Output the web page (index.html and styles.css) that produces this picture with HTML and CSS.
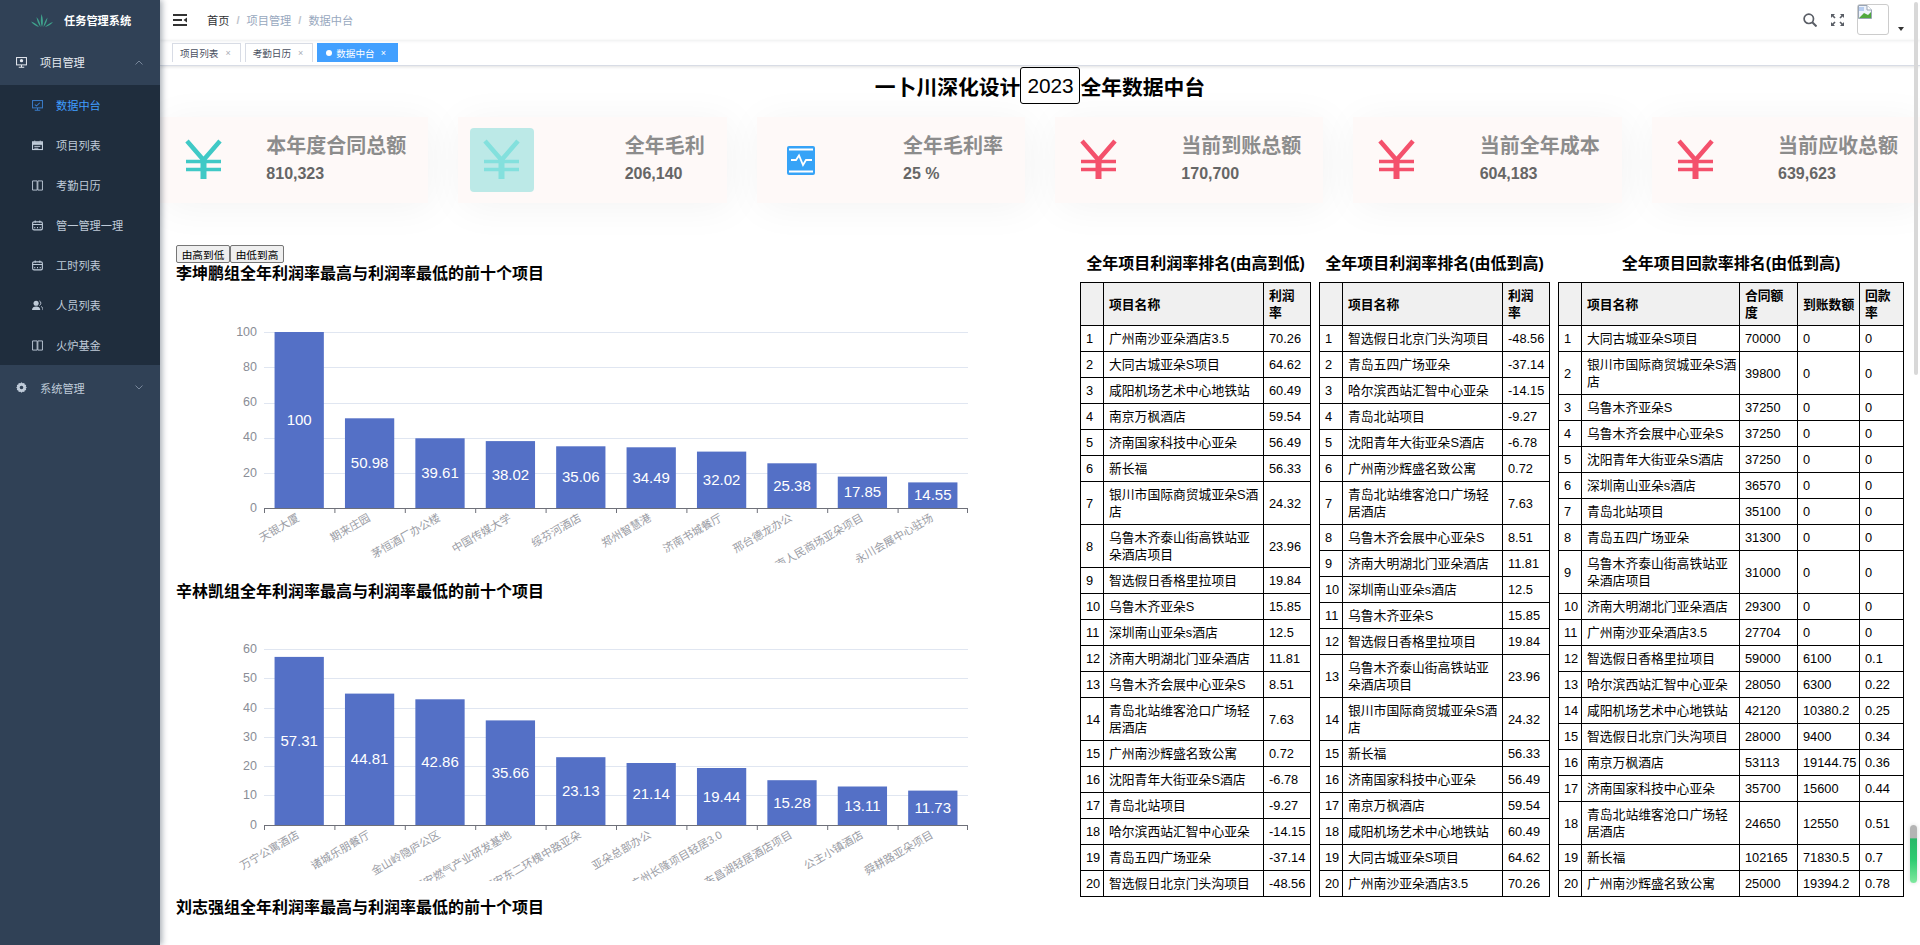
FILE: index.html
```html
<!DOCTYPE html>
<html lang="zh">
<head>
<meta charset="utf-8">
<title>数据中台</title>
<link rel="stylesheet" href="styles.css">
</head>
<body>
<svg class="sprite" aria-hidden="true">
  <symbol id="i-yuan" viewBox="0 0 48 48">
    <path d="M7 5 23.5 24 40 5" fill="none" stroke="currentColor" stroke-width="4.5"/>
    <path d="M6 25.500H41M6 33.500H41" fill="none" stroke="currentColor" stroke-width="3.500"/>
    <path d="M23.500 22V43" fill="none" stroke="currentColor" stroke-width="6"/>
  </symbol>
  <symbol id="i-monitor" viewBox="0 0 12 12">
    <rect x=".6" y=".6" width="10.800" height="8" fill="none" stroke="currentColor" stroke-width="1.100"/>
    <path d="M6 8.600V11M3 11.300H9" fill="none" stroke="currentColor" stroke-width="1.100"/>
    <circle cx="6" cy="4" r="1.800" fill="currentColor"/>
  </symbol>
  <symbol id="i-board" viewBox="0 0 12 12">
    <rect x=".6" y=".6" width="10.800" height="8" fill="none" stroke="currentColor" stroke-width="1.100"/>
    <path d="M6 8.600V11M3 11.300H9M3 5l2 1.500L8.500 3" fill="none" stroke="currentColor" stroke-width="1.100"/>
  </symbol>
  <symbol id="i-list" viewBox="0 0 12 12">
    <rect x=".6" y="2" width="10.800" height="8.400" fill="none" stroke="currentColor" stroke-width="1.200"/>
    <path d="M.6 2.500H11.400V5H.6ZM3 .5V3M9 .5V3" fill="currentColor" stroke="currentColor" stroke-width=".8"/>
    <path d="M2.500 7H9M2.500 9H7" stroke="currentColor"/>
  </symbol>
  <symbol id="i-book" viewBox="0 0 12 12">
    <path d="M.6 1H5.600V11H.6ZM6.400 1H11.400V11H6.400Z" fill="none" stroke="currentColor" stroke-width="1"/>
  </symbol>
  <symbol id="i-cal" viewBox="0 0 12 12">
    <rect x=".7" y="2" width="10.600" height="8.800" rx="1.500" fill="none" stroke="currentColor" stroke-width="1.200"/>
    <path d="M.7 5H11.300M3.500 .6V3M8.500 .6V3M3 7.500V9M6 7.500V9M9 7.500V9" fill="none" stroke="currentColor" stroke-width="1.100"/>
  </symbol>
  <symbol id="i-user" viewBox="0 0 12 12">
    <circle cx="4.500" cy="3.500" r="2.800" fill="currentColor"/>
    <path d="M0 11C0 8 2 7 4.500 7S9 8 9 11Z" fill="currentColor"/>
    <path d="M8 1a2.700 2.700 0 0 1 0 5M10 7c1.200.7 2 2 2 4" fill="none" stroke="currentColor"/>
  </symbol>
  <symbol id="i-gear" viewBox="0 0 12 12">
    <path d="M6 .3 7.300 1.400 9 1 9.500 2.600 11.100 3.200 10.700 4.900 11.800 6 10.700 7.100 11.100 8.800 9.500 9.400 9 11 7.300 10.600 6 11.700 4.700 10.600 3 11 2.500 9.400.9 8.800 1.300 7.100.2 6 1.300 4.900.9 3.200 2.500 2.600 3 1 4.700 1.400ZM6 4a2 2 0 1 0 0 4 2 2 0 0 0 0-4Z" fill="currentColor" fill-rule="evenodd"/>
  </symbol>
</svg>

<aside class="sidebar">
  <div class="logo">
    <svg class="logo-mark" viewBox="0 0 22 13"><path d="M11 13C9.500 9 9.500 5 10.500 0 12 4 12.500 9 11 13ZM9.500 13C7.500 10 6 7 5.500 3 8 6 9.500 9 9.500 13ZM12.500 13C13 9 14.500 6 16.500 3.500 16 7 15 10 12.500 13ZM8 13C5 12 2 10.500 0 7.500 3.500 8.500 6 10.500 8 13ZM14 13C16.500 10.500 19 9 22 8 20 10.500 17 12.500 14 13Z" fill="#3fa38d"/></svg>
    <span class="logo-text">任务管理系统</span>
  </div>
  <div class="menu-top open">
    <svg class="menu-icon"><use href="#i-monitor"/></svg>
    <span>项目管理</span>
    <svg class="chev" viewBox="0 0 8 5"><path d="M.5 4.500 4 1l3.500 3.500" fill="none" stroke="currentColor"/></svg>
  </div>
  <ul class="submenu">
    <li class="active"><svg class="sub-icon"><use href="#i-board"/></svg>数据中台</li>
    <li><svg class="sub-icon"><use href="#i-list"/></svg>项目列表</li>
    <li><svg class="sub-icon"><use href="#i-book"/></svg>考勤日历</li>
    <li><svg class="sub-icon"><use href="#i-cal"/></svg>管一管理一理</li>
    <li><svg class="sub-icon"><use href="#i-cal"/></svg>工时列表</li>
    <li><svg class="sub-icon"><use href="#i-user"/></svg>人员列表</li>
    <li><svg class="sub-icon"><use href="#i-book"/></svg>火炉基金</li>
  </ul>
  <div class="menu-top closed">
    <svg class="menu-icon"><use href="#i-gear"/></svg>
    <span>系统管理</span>
    <svg class="chev" viewBox="0 0 8 5"><path d="M.5.500 4 4 7.500.5" fill="none" stroke="currentColor"/></svg>
  </div>
</aside>

<div class="page">
  <header class="navbar">
    <svg class="hamburger" viewBox="0 0 14 12"><path d="M0 1H14M0 11H14M0 6H9" stroke="#333" stroke-width="2" fill="none"/><path d="M14 3.500V8.500L10.500 6Z" fill="#333"/></svg>
    <nav class="crumbs">
      <span class="crumb-home">首页</span><span class="crumb-sep">/</span><span>项目管理</span><span class="crumb-sep">/</span><span>数据中台</span>
    </nav>
    <div class="nav-right">
      <svg class="nav-icon" viewBox="0 0 14 14"><circle cx="5.800" cy="5.800" r="4.700" fill="none" stroke="#5a5e66" stroke-width="1.700"/><path d="M9.300 9.300 13.500 13.500" stroke="#5a5e66" stroke-width="2"/></svg>
      <svg class="nav-icon wide" viewBox="0 0 15 14"><path d="M1 5V1H5L3.600 2.400 5.600 4.400 4.400 5.600 2.400 3.600ZM14 5V1H10L11.400 2.400 9.400 4.400 10.600 5.600 12.600 3.600ZM1 9V13H5L3.600 11.600 5.600 9.600 4.400 8.400 2.400 10.400ZM14 9V13H10L11.400 11.600 9.400 9.600 10.600 8.400 12.600 10.400Z" fill="#5a5e66"/></svg>
      <div class="avatar">
        <svg class="broken" viewBox="0 0 14 14"><path d="M.5.500H9L13.500 5V13.500H.5Z" fill="#eef3fb" stroke="#9aa5b5"/><path d="M9 .5V5H13.500" fill="#fff" stroke="#9aa5b5"/><path d="M1 13 6 8 10 10 13 7V13Z" fill="#4fa83d"/><path d="M1 2H6V6H1Z" fill="#b7cdf0"/></svg>
      </div>
      <span class="caret"></span>
    </div>
  </header>
  <div class="tags">
    <span class="tag">项目列表<i class="tag-x">×</i></span>
    <span class="tag">考勤日历<i class="tag-x">×</i></span>
    <span class="tag current"><i class="tag-dot"></i>数据中台<i class="tag-x">×</i></span>
  </div>

  <main class="content">
    <h1 class="headline">一卜川深化设计<span class="year">2023</span>全年数据中台</h1>

    <section class="cards">
      <div class="card"><div class="card-icon teal"><svg class="card-svg"><use href="#i-yuan"/></svg></div><div class="card-text"><div class="card-title">本年度合同总额</div><div class="card-value">810,323</div></div></div>
      <div class="card"><div class="card-icon teal hover"><svg class="card-svg"><use href="#i-yuan"/></svg></div><div class="card-text"><div class="card-title">全年毛利</div><div class="card-value">206,140</div></div></div>
      <div class="card"><div class="card-icon"><svg class="card-svg" viewBox="0 0 48 48"><rect x="10" y="10" width="28" height="29" rx="2" fill="#36a3f7"/><path d="M12 13.500H36M12 35.500H36M14 24H19L22 19.500 26 29 29 24H35" fill="none" stroke="#fff" stroke-width="1.800"/></svg></div><div class="card-text"><div class="card-title">全年毛利率</div><div class="card-value">25 %</div></div></div>
      <div class="card"><div class="card-icon red"><svg class="card-svg"><use href="#i-yuan"/></svg></div><div class="card-text"><div class="card-title">当前到账总额</div><div class="card-value">170,700</div></div></div>
      <div class="card"><div class="card-icon red"><svg class="card-svg"><use href="#i-yuan"/></svg></div><div class="card-text"><div class="card-title">当前全年成本</div><div class="card-value">604,183</div></div></div>
      <div class="card"><div class="card-icon red"><svg class="card-svg"><use href="#i-yuan"/></svg></div><div class="card-text"><div class="card-title">当前应收总额</div><div class="card-value">639,623</div></div></div>
    </section>

    <section class="board">
      <div class="charts">
        <div class="sort-btns"><button class="sort-btn">由高到低</button><button class="sort-btn">由低到高</button></div>
        <h3 class="chart-title">李坤鹏组全年利润率最高与利润率最低的前十个项目</h3>
        <svg class="chart">
          <g class="grid">
            <path d="M88 46.500H792M88 81.500H792M88 117.500H792M88 152.500H792M88 187.500H792"/>
          </g>
          <g class="yticks">
            <text x="81" y="50">100</text><text x="81" y="85">80</text><text x="81" y="120">60</text><text x="81" y="155">40</text><text x="81" y="191">20</text><text x="81" y="226">0</text>
          </g>
          <g class="bars">
            <rect x="98.560" y="46" width="49.280" height="176"/><rect x="168.960" y="132.300" width="49.280" height="89.700"/><rect x="239.360" y="152.300" width="49.280" height="69.700"/><rect x="309.760" y="155.100" width="49.280" height="66.900"/><rect x="380.160" y="160.300" width="49.280" height="61.700"/><rect x="450.560" y="161.300" width="49.280" height="60.700"/><rect x="520.960" y="165.600" width="49.280" height="56.400"/><rect x="591.360" y="177.300" width="49.280" height="44.700"/><rect x="661.760" y="190.600" width="49.280" height="31.400"/><rect x="732.160" y="196.400" width="49.280" height="25.600"/>
          </g>
          <g class="vals">
            <text x="123.200" y="139">100</text><text x="193.600" y="182">50.98</text><text x="264" y="192">39.61</text><text x="334.400" y="194">38.02</text><text x="404.800" y="196">35.06</text><text x="475.200" y="197">34.49</text><text x="545.600" y="199">32.02</text><text x="616" y="205">25.38</text><text x="686.400" y="211">17.85</text><text x="756.800" y="214">14.55</text>
          </g>
          <path class="axis" d="M88 222.500H792M88.500 222V227M158.900 222V227M229.300 222V227M299.700 222V227M370.100 222V227M440.500 222V227M510.900 222V227M581.300 222V227M651.700 222V227M722.100 222V227M791.500 222V227"/>
          <g class="cats">
            <text transform="translate(124 234) rotate(-30)">天银大厦</text>
            <text transform="translate(195 234) rotate(-30)">期来庄园</text>
            <text transform="translate(265 234) rotate(-30)">茅恒酒厂办公楼</text>
            <text transform="translate(336 234) rotate(-30)">中国传媒大学</text>
            <text transform="translate(406 234) rotate(-30)">绥芬河酒店</text>
            <text transform="translate(476 234) rotate(-30)">郑州智慧港</text>
            <text transform="translate(547 234) rotate(-30)">济南书城餐厅</text>
            <text transform="translate(617 234) rotate(-30)">邢台德龙办公</text>
            <text transform="translate(688 234) rotate(-30)">济南人民商场亚朵项目</text>
            <text transform="translate(758 234) rotate(-30)">永川会展中心驻场</text>
          </g>
        </svg>

        <h3 class="chart-title spaced">辛林凯组全年利润率最高与利润率最低的前十个项目</h3>
        <svg class="chart">
          <g class="grid">
            <path d="M88 45.500H792M88 74.500H792M88 104.500H792M88 133.500H792M88 162.500H792M88 191.500H792"/>
          </g>
          <g class="yticks">
            <text x="81" y="49">60</text><text x="81" y="78">50</text><text x="81" y="108">40</text><text x="81" y="137">30</text><text x="81" y="166">20</text><text x="81" y="195">10</text><text x="81" y="225">0</text>
          </g>
          <g class="bars">
            <rect x="98.560" y="52.900" width="49.280" height="168.100"/><rect x="168.960" y="89.600" width="49.280" height="131.400"/><rect x="239.360" y="95.300" width="49.280" height="125.700"/><rect x="309.760" y="116.400" width="49.280" height="104.600"/><rect x="380.160" y="153.200" width="49.280" height="67.800"/><rect x="450.560" y="159" width="49.280" height="62"/><rect x="520.960" y="164" width="49.280" height="57"/><rect x="591.360" y="176.200" width="49.280" height="44.800"/><rect x="661.760" y="182.500" width="49.280" height="38.500"/><rect x="732.160" y="186.600" width="49.280" height="34.400"/>
          </g>
          <g class="vals">
            <text x="123.200" y="142">57.31</text><text x="193.600" y="160">44.81</text><text x="264" y="163">42.86</text><text x="334.400" y="174">35.66</text><text x="404.800" y="192">23.13</text><text x="475.200" y="195">21.14</text><text x="545.600" y="198">19.44</text><text x="616" y="204">15.28</text><text x="686.400" y="207">13.11</text><text x="756.800" y="209">11.73</text>
          </g>
          <path class="axis" d="M88 221.500H792M88.500 221V226M158.900 221V226M229.300 221V226M299.700 221V226M370.100 221V226M440.500 221V226M510.900 221V226M581.300 221V226M651.700 221V226M722.100 221V226M791.500 221V226"/>
          <g class="cats">
            <text transform="translate(124 233) rotate(-30)">万宁公寓酒店</text>
            <text transform="translate(195 233) rotate(-30)">诸城乐朋餐厅</text>
            <text transform="translate(265 233) rotate(-30)">金山岭隐庐公区</text>
            <text transform="translate(336 233) rotate(-30)">西安燃气产业研发基地</text>
            <text transform="translate(406 233) rotate(-30)">西安东二环槐中路亚朵</text>
            <text transform="translate(476 233) rotate(-30)">亚朵总部办公</text>
            <text transform="translate(547 233) rotate(-30)">广州长隆项目轻居3.0</text>
            <text transform="translate(617 233) rotate(-30)">山东昌湖轻居酒店项目</text>
            <text transform="translate(688 233) rotate(-30)">公主小镇酒店</text>
            <text transform="translate(758 233) rotate(-30)">舜耕路亚朵项目</text>
          </g>
        </svg>

        <h3 class="chart-title tight">刘志强组全年利润率最高与利润率最低的前十个项目</h3>
      </div>

      <div class="rankings">
        <div class="rank">
          <h3 class="rank-title">全年项目利润率排名(由高到低)</h3>
          <table class="rank-table narrow">
            <colgroup><col class="c-no"><col class="c-name"><col class="c-rate"></colgroup>
            <thead><tr><th></th><th>项目名称</th><th>利润率</th></tr></thead>
            <tbody>
              <tr><td>1</td><td>广州南沙亚朵酒店3.5</td><td>70.26</td></tr>
              <tr><td>2</td><td>大同古城亚朵S项目</td><td>64.62</td></tr>
              <tr><td>3</td><td>咸阳机场艺术中心地铁站</td><td>60.49</td></tr>
              <tr><td>4</td><td>南京万枫酒店</td><td>59.54</td></tr>
              <tr><td>5</td><td>济南国家科技中心亚朵</td><td>56.49</td></tr>
              <tr><td>6</td><td>新长福</td><td>56.33</td></tr>
              <tr><td>7</td><td>银川市国际商贸城亚朵S酒店</td><td>24.32</td></tr>
              <tr><td>8</td><td>乌鲁木齐泰山街高铁站亚朵酒店项目</td><td>23.96</td></tr>
              <tr><td>9</td><td>智选假日香格里拉项目</td><td>19.84</td></tr>
              <tr><td>10</td><td>乌鲁木齐亚朵S</td><td>15.85</td></tr>
              <tr><td>11</td><td>深圳南山亚朵s酒店</td><td>12.5</td></tr>
              <tr><td>12</td><td>济南大明湖北门亚朵酒店</td><td>11.81</td></tr>
              <tr><td>13</td><td>乌鲁木齐会展中心亚朵S</td><td>8.51</td></tr>
              <tr><td>14</td><td>青岛北站维客沧口广场轻居酒店</td><td>7.63</td></tr>
              <tr><td>15</td><td>广州南沙辉盛名致公寓</td><td>0.72</td></tr>
              <tr><td>16</td><td>沈阳青年大街亚朵S酒店</td><td>-6.78</td></tr>
              <tr><td>17</td><td>青岛北站项目</td><td>-9.27</td></tr>
              <tr><td>18</td><td>哈尔滨西站汇智中心亚朵</td><td>-14.15</td></tr>
              <tr><td>19</td><td>青岛五四广场亚朵</td><td>-37.14</td></tr>
              <tr><td>20</td><td>智选假日北京门头沟项目</td><td>-48.56</td></tr>
            </tbody>
          </table>
        </div>
        <div class="rank">
          <h3 class="rank-title">全年项目利润率排名(由低到高)</h3>
          <table class="rank-table narrow">
            <colgroup><col class="c-no"><col class="c-name"><col class="c-rate"></colgroup>
            <thead><tr><th></th><th>项目名称</th><th>利润率</th></tr></thead>
            <tbody>
              <tr><td>1</td><td>智选假日北京门头沟项目</td><td>-48.56</td></tr>
              <tr><td>2</td><td>青岛五四广场亚朵</td><td>-37.14</td></tr>
              <tr><td>3</td><td>哈尔滨西站汇智中心亚朵</td><td>-14.15</td></tr>
              <tr><td>4</td><td>青岛北站项目</td><td>-9.27</td></tr>
              <tr><td>5</td><td>沈阳青年大街亚朵S酒店</td><td>-6.78</td></tr>
              <tr><td>6</td><td>广州南沙辉盛名致公寓</td><td>0.72</td></tr>
              <tr><td>7</td><td>青岛北站维客沧口广场轻居酒店</td><td>7.63</td></tr>
              <tr><td>8</td><td>乌鲁木齐会展中心亚朵S</td><td>8.51</td></tr>
              <tr><td>9</td><td>济南大明湖北门亚朵酒店</td><td>11.81</td></tr>
              <tr><td>10</td><td>深圳南山亚朵s酒店</td><td>12.5</td></tr>
              <tr><td>11</td><td>乌鲁木齐亚朵S</td><td>15.85</td></tr>
              <tr><td>12</td><td>智选假日香格里拉项目</td><td>19.84</td></tr>
              <tr><td>13</td><td>乌鲁木齐泰山街高铁站亚朵酒店项目</td><td>23.96</td></tr>
              <tr><td>14</td><td>银川市国际商贸城亚朵S酒店</td><td>24.32</td></tr>
              <tr><td>15</td><td>新长福</td><td>56.33</td></tr>
              <tr><td>16</td><td>济南国家科技中心亚朵</td><td>56.49</td></tr>
              <tr><td>17</td><td>南京万枫酒店</td><td>59.54</td></tr>
              <tr><td>18</td><td>咸阳机场艺术中心地铁站</td><td>60.49</td></tr>
              <tr><td>19</td><td>大同古城亚朵S项目</td><td>64.62</td></tr>
              <tr><td>20</td><td>广州南沙亚朵酒店3.5</td><td>70.26</td></tr>
            </tbody>
          </table>
        </div>
        <div class="rank">
          <h3 class="rank-title">全年项目回款率排名(由低到高)</h3>
          <table class="rank-table wide">
            <colgroup><col class="c-no"><col class="c-name2"><col class="c-amt"><col class="c-got"><col class="c-ret"></colgroup>
            <thead><tr><th></th><th>项目名称</th><th>合同额度</th><th class="nowrap">到账数额</th><th>回款率</th></tr></thead>
            <tbody>
              <tr><td>1</td><td>大同古城亚朵S项目</td><td>70000</td><td>0</td><td>0</td></tr>
              <tr><td>2</td><td>银川市国际商贸城亚朵S酒店</td><td>39800</td><td>0</td><td>0</td></tr>
              <tr><td>3</td><td>乌鲁木齐亚朵S</td><td>37250</td><td>0</td><td>0</td></tr>
              <tr><td>4</td><td>乌鲁木齐会展中心亚朵S</td><td>37250</td><td>0</td><td>0</td></tr>
              <tr><td>5</td><td>沈阳青年大街亚朵S酒店</td><td>37250</td><td>0</td><td>0</td></tr>
              <tr><td>6</td><td>深圳南山亚朵s酒店</td><td>36570</td><td>0</td><td>0</td></tr>
              <tr><td>7</td><td>青岛北站项目</td><td>35100</td><td>0</td><td>0</td></tr>
              <tr><td>8</td><td>青岛五四广场亚朵</td><td>31300</td><td>0</td><td>0</td></tr>
              <tr><td>9</td><td>乌鲁木齐泰山街高铁站亚朵酒店项目</td><td>31000</td><td>0</td><td>0</td></tr>
              <tr><td>10</td><td>济南大明湖北门亚朵酒店</td><td>29300</td><td>0</td><td>0</td></tr>
              <tr><td>11</td><td>广州南沙亚朵酒店3.5</td><td>27704</td><td>0</td><td>0</td></tr>
              <tr><td>12</td><td>智选假日香格里拉项目</td><td>59000</td><td>6100</td><td>0.1</td></tr>
              <tr><td>13</td><td>哈尔滨西站汇智中心亚朵</td><td>28050</td><td>6300</td><td>0.22</td></tr>
              <tr><td>14</td><td>咸阳机场艺术中心地铁站</td><td>42120</td><td>10380.2</td><td>0.25</td></tr>
              <tr><td>15</td><td>智选假日北京门头沟项目</td><td>28000</td><td>9400</td><td>0.34</td></tr>
              <tr><td>16</td><td>南京万枫酒店</td><td>53113</td><td>19144.75</td><td>0.36</td></tr>
              <tr><td>17</td><td>济南国家科技中心亚朵</td><td>35700</td><td>15600</td><td>0.44</td></tr>
              <tr><td>18</td><td>青岛北站维客沧口广场轻居酒店</td><td>24650</td><td>12550</td><td>0.51</td></tr>
              <tr><td>19</td><td>新长福</td><td>102165</td><td>71830.5</td><td>0.7</td></tr>
              <tr><td>20</td><td>广州南沙辉盛名致公寓</td><td>25000</td><td>19394.2</td><td>0.78</td></tr>
            </tbody>
          </table>
        </div>
      </div>
    </section>
  </main>
</div>

<div class="scroll-thumb"></div>
<div class="scroll-green"></div>
</body>
</html>
```

FILE: styles.css
```css
* { box-sizing: border-box; }
html, body { margin: 0; height: 945px; overflow: hidden; background: #fff; }
body {
  display: flex;
  position: relative;
  font-family: "Liberation Sans", "Noto Sans CJK SC", sans-serif;
  color: #000;
}
.sprite { display: none; }

/* sidebar */
.sidebar {
  flex: 0 0 160px;
  height: 945px;
  background: #304156;
  box-shadow: 2px 0 6px rgba(0, 21, 41, .35);
  font-size: 11.2px;
  color: #bfcbd9;
  position: relative;
  z-index: 2;
}
.logo { height: 35px; display: flex; align-items: center; padding: 5px 0 0 31px; }
.logo-mark { width: 22px; height: 13px; }
.logo-text { margin-left: 11px; font-weight: 700; color: #fff; }
.menu-top { height: 50px; display: flex; align-items: center; padding: 0 17px 0 16px; }
.menu-top.open { color: #e6eaf0; padding-top: 4px; }
.menu-top.closed { padding-bottom: 5px; }
.menu-icon { width: 11px; height: 11px; margin-right: 13px; }
.chev { width: 8px; height: 5px; margin-left: auto; color: #77869a; }
.submenu { list-style: none; margin: 0; padding: 0; background: #1f2d3d; }
.submenu li { height: 40px; display: flex; align-items: center; padding-left: 32px; }
.submenu li.active { color: #409eff; }
.sub-icon { width: 11px; height: 11px; margin-right: 13px; }
.active .sub-icon { color: #3a7cc9; }

/* page */
.page { flex: 1; min-width: 0; height: 945px; display: flex; flex-direction: column; }
.navbar {
  flex: 0 0 40px;
  display: flex;
  align-items: center;
  padding-left: 13px;
  box-shadow: 0 1px 3px rgba(0, 21, 41, .08);
  font-size: 11.2px;
  color: #97a8be;
}
.hamburger { width: 14px; height: 12px; margin-right: 20px; }
.crumbs { display: flex; align-items: center; }
.crumb-home { color: #303133; }
.crumb-sep { margin: 0 7px; color: #c0c4cc; font-weight: 700; }
.nav-right { margin-left: auto; display: flex; align-items: center; padding-right: 16px; }
.nav-icon { width: 14px; height: 14px; margin-right: 13px; }
.nav-icon.wide { width: 15px; margin-right: 12px; }
.avatar { width: 32px; height: 31px; margin-top: -1px; border: 1px solid #ccc; border-radius: 3px; background: #fff; }
.broken { display: block; width: 14px; height: 14px; }
.caret {
  width: 0;
  height: 0;
  margin: 18px 0 0 9px;
  border: 3px solid transparent;
  border-top: 4px solid #333;
  border-bottom: 0;
}

.tags {
  flex: 0 0 26px;
  display: flex;
  gap: 4px;
  padding: 3px 0 0 12px;
  border-bottom: 1px solid #d8dce5;
  box-shadow: 0 1px 3px rgba(0, 0, 0, .12);
  position: relative;
  font-size: 9.6px;
}
.tag {
  height: 19px;
  display: flex;
  align-items: center;
  padding: 0 9px 0 7px;
  border: 1px solid #d8dce5;
  border-bottom: 0;
  color: #495060;
}
.tag.current { background: #42a0ff; border-color: #42a0ff; color: #fff; padding: 0 11px 0 8px; }
.tag-x { font-style: normal; margin-left: 7px; color: #a9adb5; font-size: 9px; }
.current .tag-x { color: #fff; margin-left: 6px; }
.tag-dot { width: 6px; height: 6px; border-radius: 50%; background: #fff; margin-right: 4px; }

.content { flex: 1; min-height: 0; overflow: hidden; }
.headline {
  margin: 1px 0 0;
  height: 37px;
  display: flex;
  justify-content: center;
  align-items: center;
  font-size: 20.8px;
  font-weight: 700;
}
.year {
  width: 60px;
  height: 37px;
  display: flex;
  align-items: center;
  padding-left: 6px;
  border: 1px solid #000;
  border-radius: 3px;
  font-weight: 400;
}

/* cards */
.cards { margin-top: 13px; display: grid; grid-template-columns: repeat(6, 1fr); gap: 30px; }
.card {
  height: 86px;
  display: flex;
  align-items: center;
  padding: 0 22px 0 12px;
  background: #fef9f8;
  box-shadow: 4px 4px 40px rgba(0, 0, 0, .05);
}
.card-icon { width: 64px; height: 64px; padding: 8px; border-radius: 4px; }
.card-svg { display: block; width: 48px; height: 48px; }
.teal { color: #40c9c6; }
.red { color: #f4516c; }
.card-icon.hover { background: #bce9e7; color: #83e0dd; }
.card-text { margin-left: auto; align-self: flex-start; margin-top: 19px; min-width: 80px; }
.card-title { font-size: 20px; line-height: 20px; font-weight: 700; color: #8c8c8c; white-space: nowrap; }
.card-value { margin-top: 10px; font-size: 16px; line-height: 16px; font-weight: 700; color: #666; }

/* charts */
.board { display: flex; margin-top: 42px; padding-left: 16px; }
.charts { flex: 0 0 904px; }
.sort-btns { display: flex; height: 17px; }
.sort-btn {
  width: 54px;
  height: 18px;
  padding: 0;
  font: 400 10.67px "Liberation Sans", "Noto Sans CJK SC", sans-serif;
  color: #000;
  background: #efefef;
  border: 1px solid #767676;
  border-radius: 2px;
}
.chart-title { margin: 0; font-size: 16px; line-height: 24px; font-weight: 700; }
.chart-title.spaced { margin-top: 17px; }
.chart-title.tight { margin-top: 15px; }
.chart { display: block; width: 810px; height: 277px; }
.grid path { stroke: #e0e6f1; fill: none; }
.axis { stroke: #6e7079; fill: none; }
.bars rect { fill: #5470c6; }
.yticks text { font-size: 12.500px; fill: #8a8d96; text-anchor: end; }
.vals text { font-size: 15px; fill: #fff; text-anchor: middle; }
.cats text { font-size: 11px; fill: #9a9ca4; text-anchor: end; }

/* rankings */
.rankings { display: flex; gap: 8px; padding-top: 7px; }
.rank-title { margin: 0 0 6px; font-size: 16px; line-height: 24px; font-weight: 700; text-align: center; }
.rank-table {
  border-collapse: collapse;
  table-layout: fixed;
  font-size: 12.800px;
  line-height: 17px;
}
.rank-table.narrow { width: 231px; }
.rank-table.wide { width: 346px; }
.rank-table th, .rank-table td { border: 1px solid #000; padding: 4px 2px 4px 5px; vertical-align: middle; text-align: left; }
.rank-table th { background: #f0f0f0; font-weight: 700; padding-right: 5px; }
.rank-table th.nowrap { white-space: nowrap; padding-right: 0; }
.c-no { width: 23px; }
.c-name { width: 160px; }
.c-rate { width: 47px; }
.c-name2 { width: 158px; }
.c-amt { width: 58px; }
.c-got { width: 62px; }
.c-ret { width: 44px; }

/* scrollbar overlays */
.scroll-thumb {
  position: absolute;
  left: 1914px;
  top: 2px;
  width: 4px;
  height: 373px;
  background: #d8d8d8;
  border-radius: 2px;
}
.scroll-green {
  position: absolute;
  left: 1910px;
  top: 825px;
  width: 7px;
  height: 58px;
  border-radius: 4px;
  background: linear-gradient(#b4b4b4 0 22%, #28b868 24%, #2ecc71 60%, #7fe89f 100%);
  box-shadow: 0 0 4px rgba(0, 0, 0, .15);
}
```
